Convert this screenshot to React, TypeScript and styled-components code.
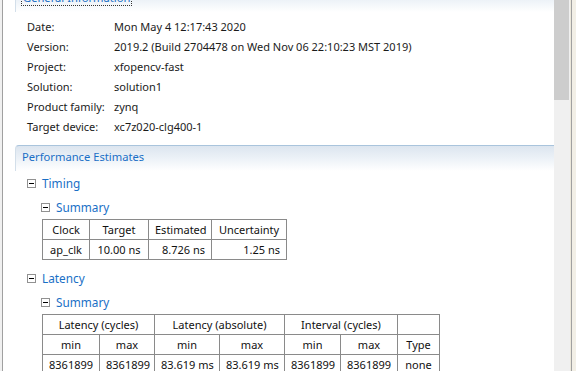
import styled, { createGlobalStyle } from 'styled-components'

const GlobalStyle = createGlobalStyle`
  html, body {
    margin: 0;
    padding: 0;
    overflow: hidden;
    background: #ffffff;
  }
  body {
    font-family: 'Noto Sans', 'Open Sans', sans-serif;
    font-size: 11px;
    color: #1b1b1b;
  }
`

const info: [string, string][] = [
  ['Date:', 'Mon May 4 12:17:43 2020'],
  ['Version:', '2019.2 (Build 2704478 on Wed Nov 06 22:10:23 MST 2019)'],
  ['Project:', 'xfopencv-fast'],
  ['Solution:', 'solution1'],
  ['Product family:', 'zynq'],
  ['Target device:', 'xc7z020-clg400-1']
]

const MinusBox = () => <Box />

const App = () => {
  return (
    <>
      <GlobalStyle />
      <Frame>
        <LeftEdge />
        <Content>
          <SectionHeader>
            <FocusTitle>General Information</FocusTitle>
          </SectionHeader>
          <InfoList>
            {info.map(([label, value]) => (
              <InfoRow key={label}>
                <InfoLabel>{label}</InfoLabel>
                <span>{value}</span>
              </InfoRow>
            ))}
          </InfoList>
          <SectionHeader>
            <HeaderTitle>Performance Estimates</HeaderTitle>
          </SectionHeader>
          <TreeRow level={0}>
            <MinusBox />
            <TreeLabel>Timing</TreeLabel>
          </TreeRow>
          <TreeRow level={1}>
            <MinusBox />
            <TreeLabel>Summary</TreeLabel>
          </TreeRow>
          <Grid width={244}>
            <colgroup>
              <col style={{ width: 47 }} />
              <col style={{ width: 59 }} />
              <col style={{ width: 63 }} />
              <col style={{ width: 75 }} />
            </colgroup>
            <tbody>
              <tr>
                <Cell>Clock</Cell>
                <Cell>Target</Cell>
                <Cell>Estimated</Cell>
                <Cell>Uncertainty</Cell>
              </tr>
              <tr>
                <Cell>ap_clk</Cell>
                <Cell>10.00 ns</Cell>
                <Cell align="right">8.726 ns</Cell>
                <Cell align="right">1.25 ns</Cell>
              </tr>
            </tbody>
          </Grid>
          <TreeRow level={0} gap={6}>
            <MinusBox />
            <TreeLabel>Latency</TreeLabel>
          </TreeRow>
          <TreeRow level={1}>
            <MinusBox />
            <TreeLabel>Summary</TreeLabel>
          </TreeRow>
          <Grid width={397}>
            <colgroup>
              <col style={{ width: 57 }} />
              <col style={{ width: 55 }} />
              <col style={{ width: 65 }} />
              <col style={{ width: 65 }} />
              <col style={{ width: 56 }} />
              <col style={{ width: 57 }} />
              <col style={{ width: 42 }} />
            </colgroup>
            <tbody>
              <tr>
                <Cell colSpan={2}>Latency (cycles)</Cell>
                <Cell colSpan={2}>Latency (absolute)</Cell>
                <Cell colSpan={2}>Interval (cycles)</Cell>
                <Cell />
              </tr>
              <tr>
                <Cell>min</Cell>
                <Cell>max</Cell>
                <Cell>min</Cell>
                <Cell>max</Cell>
                <Cell>min</Cell>
                <Cell>max</Cell>
                <Cell>Type</Cell>
              </tr>
              <tr>
                <Cell>8361899</Cell>
                <Cell>8361899</Cell>
                <Cell>83.619 ms</Cell>
                <Cell>83.619 ms</Cell>
                <Cell>8361899</Cell>
                <Cell>8361899</Cell>
                <Cell>none</Cell>
              </tr>
            </tbody>
          </Grid>
        </Content>
        <ScrollTrack>
          <ScrollThumb />
        </ScrollTrack>
        <RightEdge />
      </Frame>
    </>
  )
}

export default App

const Frame = styled.div`
  display: flex;
  width: 576px;
  height: 371px;
  overflow: hidden;
`

const LeftEdge = styled.div`
  width: 2px;
  flex-shrink: 0;
  background: #f0f0f0;
  border-right: 1px solid #a0a0a0;
`

const Content = styled.div`
  flex: 1;
  display: flex;
  flex-direction: column;
  overflow: hidden;
  margin-top: -14px;
`

const SectionHeader = styled.div`
  flex-shrink: 0;
  height: 26px;
  margin-left: 12px;
  display: flex;
  align-items: center;
  padding: 0 0 4px 6px;
  box-sizing: border-box;
  border-top: 1px solid #a9c4dc;
  border-left: 1px solid #d3dfea;
  border-top-left-radius: 4px;
  background: linear-gradient(to bottom, #dce5ef 0%, #eef3f8 55%, #ffffff 100%);
`

const HeaderTitle = styled.span`
  color: #1a6fc6;
  font-size: 11.2px;
`

const FocusTitle = styled(HeaderTitle)`
  outline: 1px dotted #333;
  padding: 0 1px;
`

const InfoList = styled.div`
  display: flex;
  flex-direction: column;
  padding: 4px 0 9px 24px;
`

const InfoRow = styled.div`
  display: flex;
  align-items: center;
  height: 20px;
`

const InfoLabel = styled.span`
  width: 87px;
  flex-shrink: 0;
`

const TreeRow = styled.div<{ level: number; gap?: number }>`
  display: flex;
  align-items: center;
  height: 24px;
  flex-shrink: 0;
  padding-left: ${({ level }) => 24 + level * 14}px;
  margin-top: ${({ gap }) => gap || 0}px;
`

const Box = styled.span`
  position: relative;
  width: 7px;
  height: 7px;
  border: 1px solid #919191;
  background: #fff;
  margin-right: 6px;
  &:after {
    content: '';
    position: absolute;
    left: 1px;
    right: 1px;
    top: 3px;
    height: 1px;
    background: #000;
  }
`

const TreeLabel = styled.span`
  color: #1a6fc6;
  font-size: 11.8px;
`

const Grid = styled.table<{ width: number }>`
  flex-shrink: 0;
  margin-left: 39px;
  border-collapse: collapse;
  table-layout: fixed;
  width: ${({ width }) => width}px;
`

const Cell = styled.td<{ align?: string }>`
  height: 19px;
  padding: 0 6px;
  border: 1px solid #8a8a8a;
  text-align: ${({ align }) => align || 'center'};
  white-space: nowrap;
  overflow: hidden;
  color: #111;
`

const ScrollTrack = styled.div`
  width: 16px;
  flex-shrink: 0;
  background: #f0f0f0;
`

const ScrollThumb = styled.div`
  width: 15px;
  height: 100px;
  background: #cdcdcd;
`

const RightEdge = styled.div`
  width: 6px;
  flex-shrink: 0;
  background: linear-gradient(to right, #ebe7da 0 1px, #a0a0a0 1px 2px, #f2efe6 2px);
`
